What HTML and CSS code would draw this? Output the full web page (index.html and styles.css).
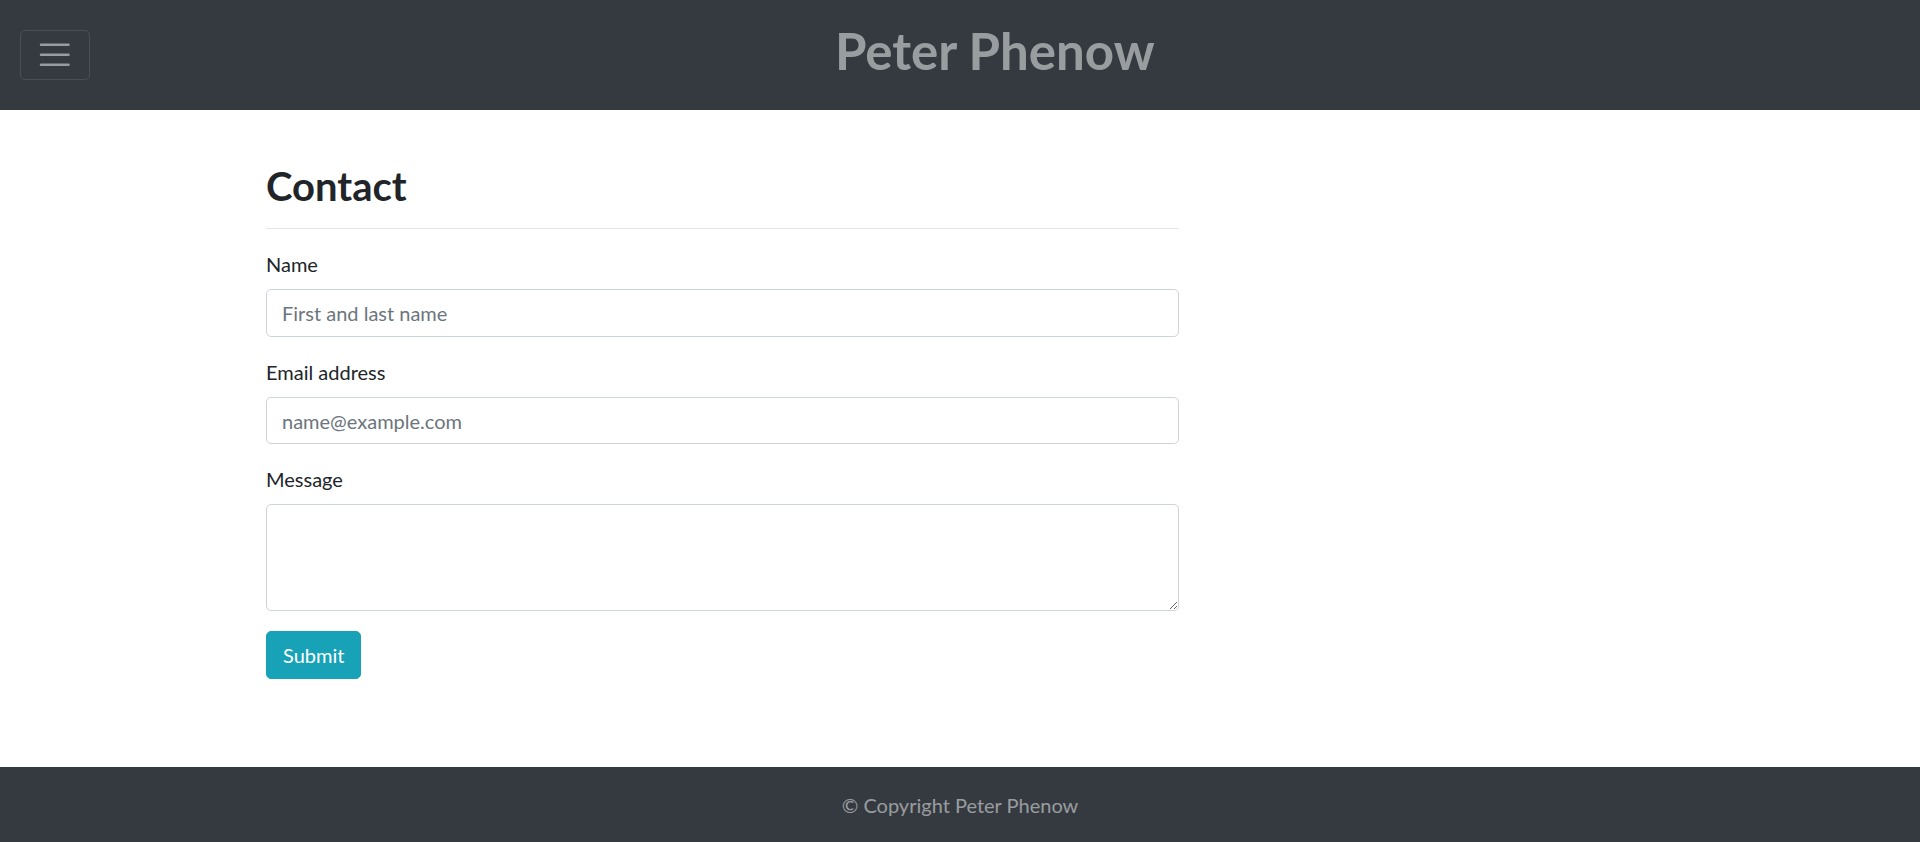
FILE: index.html
```html
<!DOCTYPE html>
<html lang="en">
<head>
<meta charset="utf-8">
<title>Contact - Peter Phenow</title>
<link rel="stylesheet" href="styles.css">
</head>
<body>
<nav class="navbar">
  <button class="navbar-toggler" type="button" aria-label="Toggle navigation">
    <svg class="toggler-icon" viewBox="0 0 30 30" width="30" height="30"><path stroke="rgba(255,255,255,0.5)" stroke-linecap="round" stroke-miterlimit="10" stroke-width="2" d="M4 7h22M4 15h22M4 23h22"/></svg>
  </button>
  <a class="navbar-brand" href="#">Peter Phenow</a>
</nav>
<main class="main">
  <div class="content">
    <h2 class="page-title">Contact</h2>
    <hr class="divider">
    <form class="contact-form">
      <div class="form-group">
        <label class="form-label" for="name">Name</label>
        <input class="form-control" id="name" type="text" placeholder="First and last name">
      </div>
      <div class="form-group">
        <label class="form-label" for="email">Email address</label>
        <input class="form-control" id="email" type="email" placeholder="name@example.com">
      </div>
      <div class="form-group">
        <label class="form-label" for="message">Message</label>
        <textarea class="form-control form-textarea" id="message" rows="3"></textarea>
      </div>
      <button class="btn-submit" type="submit">Submit</button>
    </form>
  </div>
</main>
<footer class="footer">
  <p class="footer-text">© Copyright Peter Phenow</p>
</footer>
</body>
</html>
```
FILE: styles.css
```css
* { box-sizing: border-box; }
html { font-size: 20px; }
body {
  margin: 0;
  font-family: Lato, "Noto Sans", "Liberation Sans", sans-serif;
  font-size: 20px;
  line-height: 1.5;
  color: #212529;
  background: #fff;
  min-height: 100vh;
  display: flex;
  flex-direction: column;
}
.navbar {
  background: #343a40;
  height: 110px;
  padding: 10px 20px;
  display: flex;
  align-items: center;
}
.navbar-toggler {
  width: 69.5px;
  height: 49.5px;
  padding: 5px 15px;
  background: transparent;
  border: 1px solid rgba(255,255,255,0.1);
  border-radius: 5px;
  display: flex;
  align-items: center;
  justify-content: center;
  flex-shrink: 0;
}
.toggler-icon {
  width: 37.5px;
  height: 37.5px;
  display: block;
}
.navbar-brand {
  flex: 1;
  text-align: center;
  font-size: 51px;
  font-weight: 700;
  line-height: 1.2;
  padding-bottom: 9px;
  color: rgba(255,255,255,0.5);
  text-decoration: none;
}
.main {
  flex: 1;
  padding-top: 52px;
  padding-left: 266px;
}
.content {
  width: 913px;
}
.page-title {
  margin: 0;
  font-size: 40px;
  font-weight: 700;
  line-height: 1.2;
}
.divider {
  margin: 18px 0 20px;
  border: 0;
  border-top: 1px solid rgba(0,0,0,0.1);
}
.contact-form { margin: 0; }
.form-group { margin-bottom: 20px; }
.form-label {
  display: block;
  margin-bottom: 10px;
}
.form-control {
  display: block;
  width: 100%;
  height: 47.5px;
  padding: 8px 15px 7px;
  font-family: inherit;
  font-size: 20px;
  line-height: 1.5;
  color: #495057;
  background: #fff;
  border: 1px solid #ced4da;
  border-radius: 5px;
  outline: none;
}
.form-control::placeholder { color: #6c757d; opacity: 1; }
.form-textarea {
  height: 107px;
  resize: vertical;
}
.btn-submit {
  display: inline-block;
  height: 47.5px;
  padding: 7.5px 16px;
  font-family: inherit;
  font-size: 20px;
  line-height: 1.5;
  color: #fff;
  background: #17a2b8;
  border: 1px solid #17a2b8;
  border-radius: 5px;
}
.footer {
  background: #343a40;
  height: 75px;
  padding-top: 23px;
  text-align: center;
}
.footer-text {
  margin: 0;
  color: rgba(255,255,255,0.5);
}
```
